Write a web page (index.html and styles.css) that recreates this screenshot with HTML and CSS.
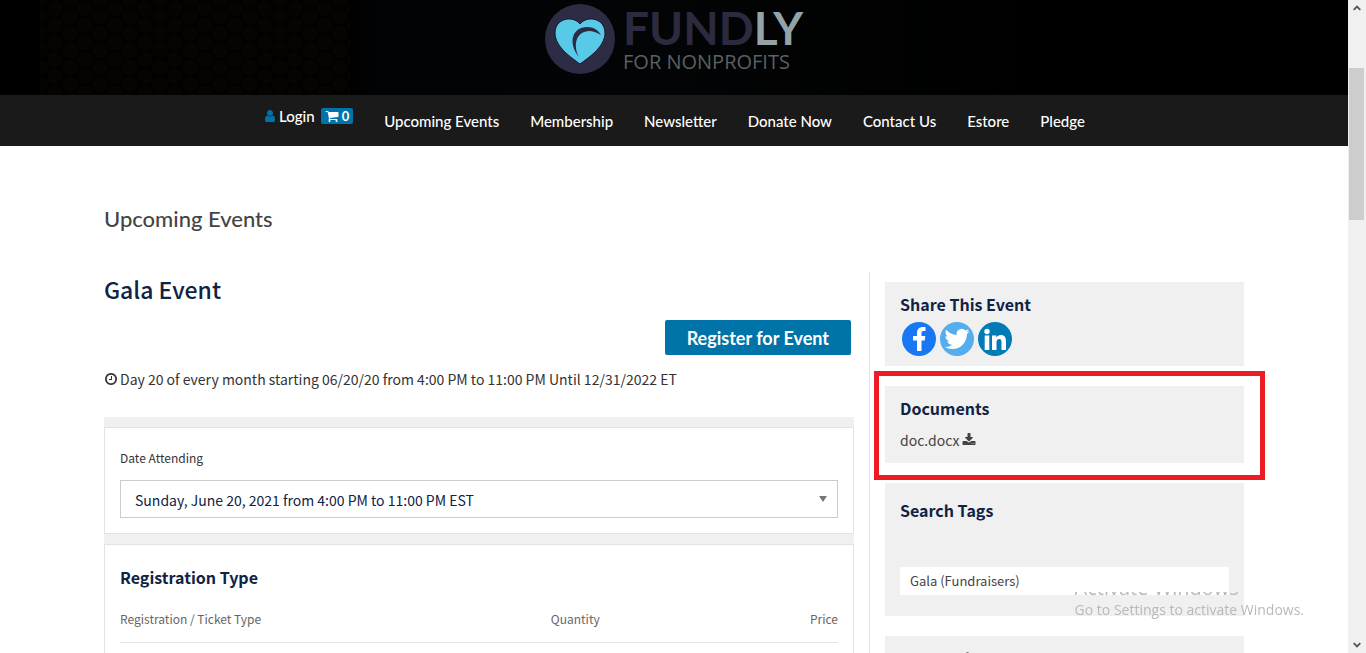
FILE: index.html
```html
<!DOCTYPE html>
<html lang="en">
  <head>
    <meta charset="UTF-8" />
    <meta name="viewport" content="width=device-width, initial-scale=1.0" />
    <title>Gala Event - Fundly for Nonprofits</title>
    <link rel="stylesheet" href="styles.css">
  </head>

  <body>
    <div class="page">
      <header class="site-header">
        <div class="header-pattern"></div>
        <a href="#" class="logo">
          <svg class="logo-mark" viewBox="0 0 70 70" aria-hidden="true">
            <circle cx="35" cy="35" r="35" fill="#2c2d44" />
            <path d="M35 60C27 54 10 43 10 29C10 14 28 11 35 20C42 11 60 14 60 29C60 43 43 54 35 60Z" fill="#59c9e8" stroke="#1d1530" stroke-width="1" />
            <path d="M34 53C22 38 28 23 42 23C49 23 53 26 56 31C46 25 38 26 33 33C30 38 30 46 34 53Z" fill="#2c2a44" />
          </svg>
          <span class="logo-text">
            <span class="logo-name">FUND<span class="logo-ly">LY</span></span>
            <span class="logo-tagline">FOR NONPROFITS</span>
          </span>
        </a>
      </header>

      <nav class="main-nav">
        <div class="account">
          <a href="#" class="login">
            <svg class="icon-user" viewBox="0 0 1792 1792" aria-hidden="true"><path d="M1536 1399q0 109-62.5 187t-150.5 78h-854q-88 0-150.5-78t-62.5-187q0-85 8.5-160.5t31.5-152 58.5-131 94-89 134.5-34.5q131 128 313 128t313-128q76 0 134.5 34.5t94 89 58.5 131 31.5 152 8.5 160.5zm-256-887q0 159-112.5 271.5t-271.5 112.5-271.5-112.5-112.5-271.5 112.5-271.5 271.5-112.5 271.5 112.5 112.5 271.5z" /></svg>
            Login
          </a>
          <a href="#" class="cart">
            <svg viewBox="0 0 1792 1792" aria-hidden="true"><path d="M704 1536q0 52-38 90t-90 38-90-38-38-90 38-90 90-38 90 38 38 90zm896 0q0 52-38 90t-90 38-90-38-38-90 38-90 90-38 90 38 38 90zm128-1088v512q0 24-16.5 42.5t-40.5 21.5l-1044 122q13 60 13 70 0 16-24 64h920q26 0 45 19t19 45-19 45-45 19h-1024q-26 0-45-19t-19-45q0-11 8-31.5t16-36 21.5-40 15.5-29.5l-177-823h-204q-26 0-45-19t-19-45 19-45 45-19h256q16 0 28.5 6.5t19.5 15.5 13 24.5 8 26 5.5 29.5 4.5 26h1201q26 0 45 19t19 45z" /></svg>
            0
          </a>
        </div>
        <a href="#">Upcoming Events</a>
        <a href="#">Membership</a>
        <a href="#">Newsletter</a>
        <a href="#">Donate Now</a>
        <a href="#">Contact Us</a>
        <a href="#">Estore</a>
        <a href="#">Pledge</a>
      </nav>

      <div class="container">
        <h1>Upcoming Events</h1>

        <div class="columns">
          <main>
            <h2>Gala Event</h2>
            <div class="actions">
              <button type="button" class="register-btn">Register for Event</button>
            </div>
            <p class="event-date">
              <svg viewBox="0 0 1792 1792" aria-hidden="true"><path d="M1024 544v448q0 14-9 23t-23 9h-320q-14 0-23-9t-9-23v-64q0-14 9-23t23-9h224v-352q0-14 9-23t23-9h64q14 0 23 9t9 23zm416 352q0-148-73-273t-198-198-273-73-273 73-198 198-73 273 73 273 198 198 273 73 273-73 198-198 73-273zm224 0q0 209-103 385.5t-279.5 279.5-385.5 103-385.5-103-279.5-279.5-103-385.5 103-385.5 279.5-279.5 385.5-103 385.5 103 279.5 279.5 103 385.5z" /></svg>
              Day 20 of every month starting 06/20/20 from 4:00 PM to 11:00 PM Until 12/31/2022 ET
            </p>

            <div class="registration">
              <section class="panel">
                <label for="date-attending">Date Attending</label>
                <div class="select-wrap">
                  <select id="date-attending">
                    <option>Sunday, June 20, 2021 from 4:00 PM to 11:00 PM EST</option>
                  </select>
                </div>
              </section>
              <section class="panel panel-types">
                <h3>Registration Type</h3>
                <table>
                  <thead>
                    <tr>
                      <th class="col-type">Registration / Ticket Type</th>
                      <th>Quantity</th>
                      <th class="col-price">Price</th>
                    </tr>
                  </thead>
                </table>
              </section>
            </div>
          </main>

          <aside>
            <section class="card share">
              <h3>Share This Event</h3>
              <div class="share-links">
                <a href="#" aria-label="Facebook">
                  <svg viewBox="0 0 34 34"><circle cx="17" cy="17" r="17" fill="#1877f2" /><path d="M15 29V18.500H11V14H15V11C15 7 17.500 5 21 5H23.500V9H21.500C20 9 19.500 9.800 19.500 11.200V14H23.300L22.700 18.500H19.500V29Z" fill="#fff" /></svg>
                </a>
                <a href="#" aria-label="Twitter">
                  <svg viewBox="0 0 34 34"><circle cx="17" cy="17" r="17" fill="#55acee" /><path transform="translate(4.500 4.500) scale(1.040)" d="M23.953 4.570a10 10 0 01-2.825.775 4.958 4.958 0 002.163-2.723c-.951.555-2.005.959-3.127 1.184a4.920 4.920 0 00-8.384 4.482C7.690 8.095 4.067 6.130 1.640 3.162a4.822 4.822 0 00-.666 2.475c0 1.710.870 3.213 2.188 4.096a4.904 4.904 0 01-2.228-.616v.060a4.923 4.923 0 003.946 4.827 4.996 4.996 0 01-2.212.085 4.936 4.936 0 004.604 3.417 9.867 9.867 0 01-6.102 2.105c-.390 0-.779-.023-1.170-.067a13.995 13.995 0 007.557 2.209c9.053 0 13.998-7.496 13.998-13.985 0-.210 0-.420-.015-.630A9.935 9.935 0 0024 4.590z" fill="#fff" /></svg>
                </a>
                <a href="#" aria-label="LinkedIn">
                  <svg viewBox="0 0 34 34"><circle cx="17" cy="17" r="17" fill="#007bb5" /><g fill="#fff"><circle cx="9" cy="9.500" r="2.700" /><path d="M6.700 13.500H11.300V28H6.700ZM14 13.500H18.300V15.500C19.200 14 20.800 13.100 22.800 13.100C26.800 13.100 28 15.600 28 19.400V28H23.500V20.300C23.500 18.300 23.200 17 21.300 17C19.300 17 18.500 18.400 18.500 20.300V28H14Z" /></g></svg>
                </a>
              </div>
            </section>

            <section class="card documents">
              <h3>Documents</h3>
              <a href="#" class="doc-link">
                doc.docx
                <svg viewBox="0 0 1792 1792" aria-hidden="true"><path d="M1344 1344q0-26-19-45t-45-19-45 19-19 45 19 45 45 19 45-19 19-45zm256 0q0-26-19-45t-45-19-45 19-19 45 19 45 45 19 45-19 19-45zm128-224v320q0 40-28 68t-68 28h-1472q-40 0-68-28t-28-68v-320q0-40 28-68t68-28h465l135 136q58 56 136 56t136-56l136-136h464q40 0 68 28t28 68zm-325-569q17 41-14 70l-448 448q-18 19-45 19t-45-19l-448-448q-31-29-14-70 17-39 59-39h256v-448q0-26 19-45t45-19h256q26 0 45 19t19 45v448h256q42 0 59 39z" /></svg>
              </a>
              <div class="highlight"></div>
            </section>

            <section class="card tags">
              <h3>Search Tags</h3>
              <a href="#" class="tag">Gala (Fundraisers)</a>
            </section>

            <section class="card">
              <h3>Keyword</h3>
            </section>
          </aside>
        </div>
      </div>
    </div>

    <div class="scrollbar" aria-hidden="true">
      <svg viewBox="0 0 17 17"><path d="M5 10L8.500 6.500L12 10" /></svg>
      <div class="scroll-track"><div class="scroll-thumb"></div></div>
      <svg viewBox="0 0 17 17"><path d="M5 7L8.500 10.500L12 7" /></svg>
    </div>

    <div class="watermark">
      <div class="watermark-title">Activate Windows</div>
      <div>Go to Settings to activate Windows.</div>
    </div>
  </body>
</html>
```

FILE: styles.css
```css
* {
  box-sizing: border-box;
}

body {
  margin: 0;
  height: 100vh;
  display: flex;
  overflow: hidden;
  font-family: "Noto Sans CJK SC", sans-serif;
  font-size: 14px;
  line-height: 20px;
  color: #333;
  background: #fff;
}

a {
  color: inherit;
  text-decoration: none;
}

h1,
h2,
h3,
p {
  margin: 0;
}

.page {
  flex: 1;
  min-width: 0;
  overflow: hidden;
}

/* Header */
.site-header {
  position: relative;
  height: 95px;
  padding-top: 4px;
  display: flex;
  justify-content: center;
  align-items: flex-start;
  background: linear-gradient(90deg, #000 26%, #020305 28%, #030405 50%, #000 75%);
}

.header-pattern {
  position: absolute;
  top: 0;
  left: 3%;
  width: 23%;
  height: 100%;
  background-image: radial-gradient(circle, #050401 7px, transparent 9px),
    radial-gradient(circle, #050401 7px, transparent 9px);
  background-size: 30px 17px;
  background-position: 0 0, 15px 8px;
}

.logo {
  position: relative;
  display: flex;
  gap: 8px;
}

.logo-mark {
  width: 70px;
  height: 70px;
}

.logo-text {
  display: flex;
  flex-direction: column;
}

.logo-name {
  font-family: Lato, sans-serif;
  font-size: 46px;
  font-weight: bold;
  line-height: 48px;
  color: #2c2a3f;
}

.logo-ly {
  color: #93a3a8;
}

.logo-tagline {
  font-family: "Open Sans", sans-serif;
  font-size: 20px;
  font-weight: 500;
  line-height: 20px;
  color: #586164;
}

/* Navigation */
.main-nav {
  display: flex;
  justify-content: center;
  align-items: center;
  gap: 31px;
  height: 51px;
  font-family: Lato, sans-serif;
  font-size: 15px;
  font-weight: 500;
  color: #fff;
  background: #1a1a1a;
}

.account {
  display: flex;
  align-items: center;
  gap: 6px;
  padding-bottom: 9px;
}

.login {
  display: flex;
  align-items: center;
  gap: 2px;
}

.icon-user {
  width: 14px;
  height: 14px;
  fill: #0073a8;
}

.cart {
  display: flex;
  align-items: center;
  gap: 3px;
  height: 16px;
  padding: 0 4px;
  border-radius: 2px;
  font-size: 13px;
  font-weight: bold;
  background: #0073a8;
}

.cart svg {
  width: 14px;
  height: 14px;
  fill: #fff;
}

/* Content */
.container {
  max-width: 1140px;
  margin: 0 auto;
  padding-top: 59px;
}

h1 {
  margin-bottom: 39px;
  font-family: Lato, sans-serif;
  font-size: 22px;
  font-weight: 500;
  line-height: 28px;
  color: #444;
}

.columns {
  display: grid;
  grid-template-columns: minmax(0, 1fr) 375px;
  gap: 15px;
}

h2 {
  font-size: 23px;
  font-weight: 500;
  line-height: 34px;
  color: #0f2345;
}

h3 {
  font-size: 16px;
  font-weight: bold;
  line-height: 20px;
  color: #0f2345;
}

.actions {
  display: flex;
  justify-content: flex-end;
  padding: 14px 3px 14px 0;
}

.register-btn {
  height: 35px;
  padding: 0 22px;
  border: none;
  border-radius: 2px;
  font-family: Lato, sans-serif;
  font-size: 18px;
  font-weight: bold;
  color: #fff;
  background: #0073a8;
  cursor: pointer;
}

.event-date {
  display: flex;
  align-items: center;
  gap: 2px;
  margin-bottom: 28px;
}

.event-date svg {
  width: 14px;
  height: 14px;
  fill: #333;
}

.registration {
  display: flex;
  flex-direction: column;
  gap: 10px;
  padding-top: 10px;
  background: #f0f0f0;
}

.panel {
  padding: 20px 15px 15px;
  border: 1px solid #e3e3e3;
  background: #fff;
}

.panel label {
  display: block;
  margin-bottom: 12px;
  font-size: 12px;
}

.select-wrap {
  position: relative;
}

.select-wrap::after {
  content: "";
  position: absolute;
  top: 16px;
  right: 11px;
  border: 4px solid transparent;
  border-top: 6px solid #777;
  border-bottom: none;
  pointer-events: none;
}

select {
  appearance: none;
  display: block;
  width: 100%;
  height: 38px;
  padding: 2px 14px 0;
  border: 1px solid #ccc;
  border-radius: 0;
  font-family: inherit;
  font-size: 14px;
  color: #0f2345;
  background: #fff;
}

.panel-types {
  padding: 22px 15px 40px;
}

table {
  width: 100%;
  margin-top: 22px;
  border-collapse: collapse;
}

th {
  padding: 0 0 13px;
  border-bottom: 1px solid #e3e3e3;
  font-size: 12px;
  font-weight: normal;
  text-align: left;
  color: #666;
}

.col-type {
  width: 60%;
}

th.col-price {
  text-align: right;
}

/* Sidebar */
aside {
  display: flex;
  flex-direction: column;
  gap: 20px;
  padding: 10px 0 0 15px;
  border-left: 1px solid #e3e3e3;
}

.card {
  position: relative;
  padding: 12px 15px;
  background: #f0f0f0;
}

.share {
  padding-bottom: 10px;
}

.share-links {
  display: flex;
  gap: 4px;
  padding: 8px 2px 0;
}

.share-links a,
.share-links svg {
  display: block;
  width: 34px;
  height: 34px;
}

.documents {
  padding-bottom: 13px;
}

.doc-link {
  display: flex;
  align-items: center;
  gap: 3px;
  margin-top: 12px;
  color: #444;
}

.doc-link svg {
  width: 14px;
  height: 14px;
  fill: #444;
}

/* red frame round the documents card */
.highlight {
  position: absolute;
  top: -15px;
  right: -21px;
  bottom: -17px;
  left: -11px;
  border: 5px solid #ed1c24;
}

.tags {
  padding: 17px 15px 21px;
}

.tag {
  display: block;
  margin-top: 47px;
  padding: 4px 10px;
  font-size: 13px;
  color: #444;
  background: #fff;
}

/* Scrollbar */
.scrollbar {
  display: flex;
  flex-direction: column;
  width: 18px;
  padding: 0 1px;
  background: #f0f0f0;
}

.scrollbar svg {
  width: 16px;
  height: 17px;
  fill: none;
  stroke: #555;
  stroke-width: 2;
}

.scroll-track {
  flex: 1;
  padding-top: 51px;
}

.scroll-thumb {
  width: 15px;
  height: 152px;
  background: #cdcdcd;
}

.watermark {
  position: fixed;
  right: 62px;
  bottom: 33px;
  font-family: "Open Sans", sans-serif;
  font-size: 14px;
  color: #b9b9b9;
}

/* only the foot of the line shows */
.watermark-title {
  display: flex;
  align-items: flex-end;
  height: 6px;
  margin-bottom: 2px;
  overflow: hidden;
  font-size: 20px;
}
```
